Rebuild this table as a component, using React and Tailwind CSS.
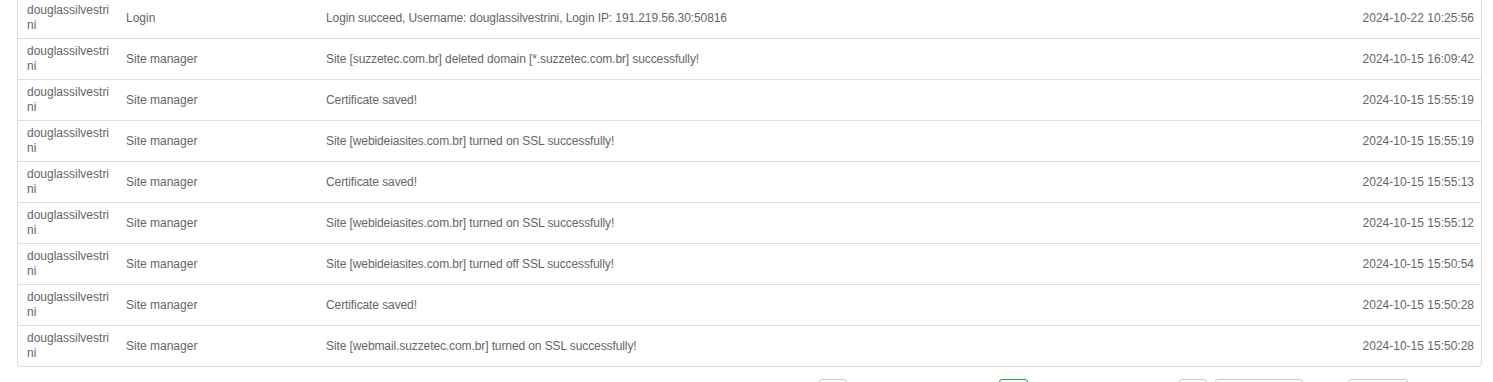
import React from "react";

const rows = [
  ["Login", "Login succeed, Username: douglassilvestrini, Login IP: 191.219.56.30:50816", "2024-10-22 10:25:56"],
  ["Site manager", "Site [suzzetec.com.br] deleted domain [*.suzzetec.com.br] successfully!", "2024-10-15 16:09:42"],
  ["Site manager", "Certificate saved!", "2024-10-15 15:55:19"],
  ["Site manager", "Site [webideiasites.com.br] turned on SSL successfully!", "2024-10-15 15:55:19"],
  ["Site manager", "Certificate saved!", "2024-10-15 15:55:13"],
  ["Site manager", "Site [webideiasites.com.br] turned on SSL successfully!", "2024-10-15 15:55:12"],
  ["Site manager", "Site [webideiasites.com.br] turned off SSL successfully!", "2024-10-15 15:50:54"],
  ["Site manager", "Certificate saved!", "2024-10-15 15:50:28"],
  ["Site manager", "Site [webmail.suzzetec.com.br] turned on SSL successfully!", "2024-10-15 15:50:28"],
];

export default function App() {
  return (
    <div
      className="w-[1493px] h-[382px] overflow-hidden bg-white text-[12px] text-[#666]"
      style={{ fontFamily: '"Liberation Sans", Arial, sans-serif' }}
    >
      <div className="mx-[17px] -mt-[2px] w-[1465px] border-x border-b border-[#ddd] rounded-b-[4px]">
        <table className="w-full table-fixed border-collapse">
          <colgroup>
            <col className="w-[99px]" />
            <col className="w-[200px]" />
            <col />
            <col className="w-[200px]" />
          </colgroup>
          <tbody>
            {rows.map((r, i) => (
              <tr key={i} className={i < rows.length - 1 ? "border-b border-[#ddd]" : ""}>
                <td className="pl-[9px] pr-[4px] py-[5px] leading-[15px] align-middle">
                  <span className="block">douglassilvestri</span>
                  <span className="block">ni</span>
                </td>
                <td className="pl-[9px] py-[5px] leading-[15px] align-middle">{r[0]}</td>
                <td className="pl-[9px] py-[5px] leading-[15px] align-middle tracking-[-0.1px]">{r[1]}</td>
                <td className="pr-[7px] py-[5px] leading-[15px] align-middle text-right">{r[2]}</td>
              </tr>
            ))}
          </tbody>
        </table>
      </div>
      <div className="mt-[12px] flex items-start pl-[819px]">
        <div className="w-[28px] h-[28px] border border-[#ccc] rounded-[3px]" />
        <div className="ml-[152px] w-[29px] h-[28px] border border-[#20a53a] rounded-[3px]" />
        <div className="ml-[151px] w-[28px] h-[28px] border border-[#ccc] rounded-[3px]" />
        <div className="ml-[8px] w-[88px] h-[28px] border border-[#ccc] rounded-[3px]" />
        <div className="ml-[45px] w-[60px] h-[28px] border border-[#ccc] rounded-[3px]" />
      </div>
    </div>
  );
}
